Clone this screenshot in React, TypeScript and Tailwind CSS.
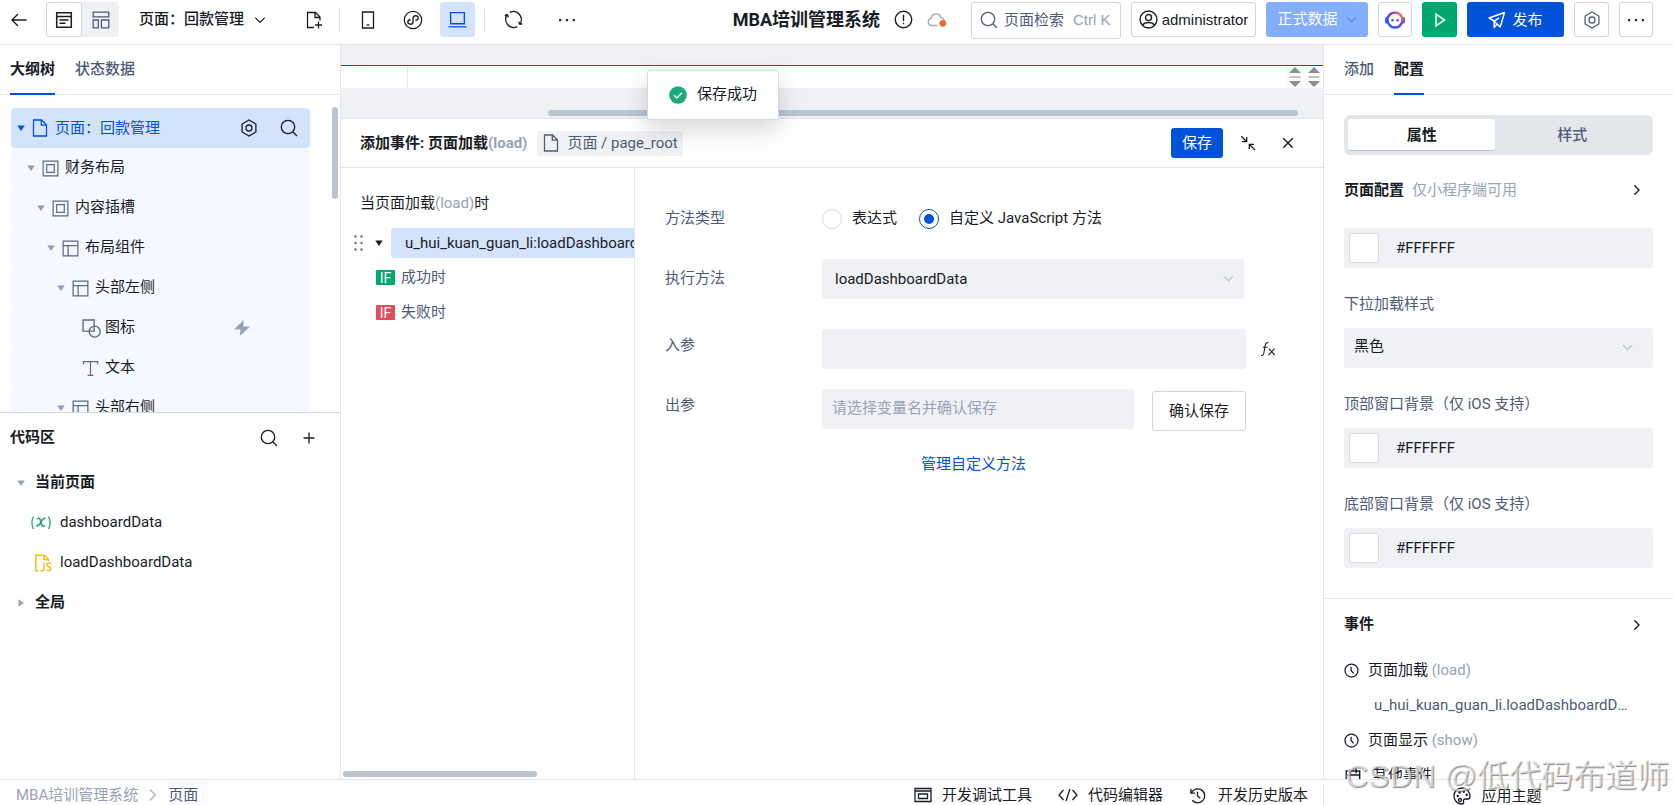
import { useState, type ReactNode } from "react";

type IconProps = { size?: number; className?: string; children?: ReactNode };

function Svg({ size = 18, className = "", children }: IconProps) {
  return (
    <svg
      width={size}
      height={size}
      viewBox="0 0 18 18"
      fill="none"
      stroke="currentColor"
      strokeWidth="1.3"
      aria-hidden="true"
      className={`shrink-0 ${className}`}
    >
      {children}
    </svg>
  );
}

const BackIcon = () => (
  <Svg>
    <path d="M16.5 9H2M8 3 2 9l6 6" />
  </Svg>
);
const ListIcon = () => (
  <Svg>
    <path d="M1.7 1.7h14.6v14.6H1.7zM1.7 5.5h14.6M4.5 9h9M4.5 12.3h6" strokeWidth="1.5" />
  </Svg>
);
const BlocksIcon = () => (
  <Svg>
    <path d="M1.2 1.2h15.6v4.6H1.2zM1.2 9h5.1v7.8H1.2zM9.4 9h7.4v7.8H9.4z" />
  </Svg>
);
const ChevronDown = ({ size = 12, className = "" }: IconProps) => (
  <Svg size={size} className={className}>
    <path d="m2 5.5 7 7 7-7" strokeWidth="1.8" />
  </Svg>
);
const ChevronRight = ({ size = 12, className = "" }: IconProps) => (
  <Svg size={size} className={className}>
    <path d="m5 2 7 7-7 7" strokeWidth="2" />
  </Svg>
);
const FilePlusIcon = () => (
  <Svg>
    <path d="M9 16.5H2.5v-15h8l4.5 4.500v3.500M10 1.500v5h5M10 14h7M13.500 10.500v7" />
  </Svg>
);
const PhoneIcon = () => (
  <Svg>
    <path d="M3.500 1h11v16h-11z" />
    <path d="M7.500 14h3" />
  </Svg>
);
const MiniAppIcon = () => (
  <Svg size={20}>
    <circle cx="9" cy="9" r="7.800" strokeWidth="1.100" />
    <path d="M6.800 8.800c-3.400.2-3.200 4 0 4 1.300 0 2.200-.9 2.200-2V7.200c0-1.100.9-2 2.200-2 3.200 0 3.400 3.800 0 4" strokeWidth="1.200" />
  </Svg>
);
const LaptopIcon = () => (
  <Svg size={19}>
    <path d="M2.500 2.500h13v10.500h-13zM.5 16h17" strokeWidth="1.300" />
  </Svg>
);
const RefreshIcon = () => (
  <Svg size={19}>
    <path d="M5.500 2.200a7.600 7.600 0 0 1 9.300 11.500M12.500 15.800A7.600 7.600 0 0 1 3.200 4.300M3.200 4.300l-2.400.9M3.200 4.300l.9 2.700M14.800 13.700l-.8-2.700M14.800 13.700l2.500-.7" />
  </Svg>
);
const DotsIcon = () => (
  <Svg>
    <g fill="currentColor" stroke="none">
      <rect x="1" y="8" width="2.200" height="2.200" rx=".6" />
      <rect x="7.900" y="8" width="2.200" height="2.200" rx=".6" />
      <rect x="14.800" y="8" width="2.200" height="2.200" rx=".6" />
    </g>
  </Svg>
);
const AlertIcon = () => (
  <Svg size={19}>
    <circle cx="9" cy="9" r="7.800" />
    <path d="M9 4.500v6" />
    <path d="M9 12v1.500" />
  </Svg>
);
const CloudIcon = () => (
  <svg width="20" height="18" viewBox="0 0 20 18" fill="none" aria-hidden="true" className="shrink-0">
    <path d="M10.500 14.500H4.800a3.700 3.700 0 0 1-.6-7.300 5 5 0 0 1 9.800-.4c1.800.2 3 1.200 3.400 2.700" stroke="#a3aec2" strokeWidth="1.400" />
    <circle cx="15.800" cy="12.300" r="3.400" fill="#ed6c2d" />
  </svg>
);
const SearchIcon = ({ size = 18, className = "" }: IconProps) => (
  <Svg size={size} className={className}>
    <circle cx="8" cy="8" r="6.700" />
    <path d="m13 13 4 4" />
  </Svg>
);
const UserIcon = () => (
  <Svg size={19}>
    <circle cx="9" cy="9" r="8" />
    <circle cx="9" cy="7.200" r="2.900" />
    <path d="M3.500 14.500c1-2.200 3-2.700 5.500-2.700s4.500.5 5.500 2.700" />
  </Svg>
);
const BotIcon = () => (
  <svg width="20" height="20" viewBox="0 0 20 20" fill="none" aria-hidden="true" className="shrink-0">
    <defs>
      <linearGradient id="bot" x1="3" y1="17" x2="16" y2="3" gradientUnits="userSpaceOnUse">
        <stop offset="0" stopColor="#2a5bff" />
        <stop offset=".6" stopColor="#6a35f5" />
        <stop offset="1" stopColor="#ff7a45" />
      </linearGradient>
    </defs>
    <rect x="0" y="7" width="3.500" height="6.500" rx="1.500" fill="#2a5bff" />
    <rect x="16.500" y="7" width="3.500" height="6.500" rx="1.500" fill="#8a4bf0" />
    <circle cx="10" cy="10" r="7.500" fill="#fff" stroke="url(#bot)" strokeWidth="2.400" />
    <circle cx="7.500" cy="10.200" r="1.200" fill="#5a3cf5" />
    <circle cx="12.500" cy="10.200" r="1.200" fill="#5a3cf5" />
  </svg>
);
const PlayIcon = () => (
  <Svg>
    <path d="M5 3.200v11.600L13.500 9z" strokeWidth="1.600" />
  </Svg>
);
const SendIcon = () => (
  <Svg>
    <path d="M16.500 1.500 1.200 7l5 3.200 6 5.800zM6.200 10.200v6.300l2.600-3M6.200 10.200 11 6.800" strokeWidth="1.500" strokeLinejoin="round" />
  </Svg>
);
const HexIcon = () => (
  <Svg>
    <path d="m9 1 6.900 4v8L9 17l-6.900-4V5z" />
    <circle cx="9" cy="9" r="3" />
  </Svg>
);
const FileIcon = () => (
  <Svg>
    <path d="M2.500 1h8L15.500 6v11h-13zM10.300 1v5.200h5.200" />
  </Svg>
);
const SlotIcon = () => (
  <Svg size={17}>
    <path d="M1.200 1.200h15.600v15.600H1.200zM5 5h8v8H5z" />
  </Svg>
);
const LayoutIcon = () => (
  <Svg size={17}>
    <path d="M1.200 1.200h15.600v15.600H1.200zM1.200 6h15.600M6.500 6v10.800" />
  </Svg>
);
const ShapesIcon = () => (
  <Svg size={19}>
    <path d="M1 1h10.500v10.500H1z" />
    <circle cx="12" cy="12" r="5.200" />
  </Svg>
);
const TextIcon = () => (
  <Svg size={17}>
    <path d="M1.500 4.500V1.700h15v2.800M9 1.700v14.600M6 16.300h6" />
  </Svg>
);
const BoltIcon = () => (
  <Svg size={18}>
    <path d="M10.500 1 1 10.500h6.500L6.800 17 17 7.500h-6.500z" fill="currentColor" stroke="none" />
  </Svg>
);
const PlusIcon = () => (
  <Svg size={14}>
    <path d="M9 2v14M2 9h14" strokeWidth="1.700" />
  </Svg>
);
const VariableIcon = () => (
  <svg width="20" height="16" viewBox="0 0 20 16" fill="none" stroke="currentColor" strokeWidth="1.300" aria-hidden="true" className="shrink-0">
    <path d="M2.500 1.500c-2 4-2 8.500 0 12.500M17.500 1.500c2 4 2 8.500 0 12.500" />
    <path d="M6 3.800c3-1.500 3.500 1 4 3.200.5 2.800 1.200 5.300 3.800 3.800M14.500 3.300c-2.800-.5-3.800 2.300-4.500 3.700-.9 2-2 4.300-4.800 3.800" strokeWidth="1.700" />
  </svg>
);
const JsFileIcon = () => (
  <Svg size={18}>
    <path d="M4.500 16.800H1.800V1.200h8.700l3.700 3.800v2.300M9.800 1.200v4.300h4.400" strokeWidth="1.500" />
    <path d="M9.800 8.800v6.200c0 1.200-.6 1.800-1.600 1.800H6.500M16.800 9.800c-.6-.5-1.300-.7-2-.7-1.200 0-1.900.7-1.900 1.600 0 2.300 3.900 1.700 3.900 4.100 0 1-.8 1.800-2 1.800-.9 0-1.700-.3-2.200-.9" strokeWidth="1.500" />
  </Svg>
);
const ShrinkIcon = () => (
  <Svg size={16}>
    <path d="m1.500 1.500 6 6M7.500 2.200v5.300H2.200M17 17l-6.500-6.500M10.500 15.800v-5.300h5.300" strokeWidth="1.500" />
  </Svg>
);
const CloseIcon = () => (
  <Svg size={14}>
    <path d="m3 3 12 12M15 3 3 15" strokeWidth="1.800" />
  </Svg>
);
const ClockIcon = () => (
  <Svg size={15}>
    <circle cx="9" cy="9" r="7.800" strokeWidth="1.500" />
    <path d="M8.500 4.500V9l3 3.500" strokeWidth="1.500" />
  </Svg>
);
const CalendarIcon = () => (
  <Svg size={16}>
    <path d="M1.500 3.500h15v13h-15zM1.500 8h15M5.500 1v5M12.500 1v5" strokeWidth="1.700" />
  </Svg>
);
const FxIcon = () => (
  <Svg size={16}>
    <path d="M9.500 2.200c-2-1-3.200 0-3.600 2.300l-1.600 9.300c-.3 2-1.300 2.800-3 2.200M3 7h5.500M10 8.500l6.500 7.500M16.500 8.500 9.500 16" strokeWidth="1.200" />
  </Svg>
);
const DebugIcon = () => (
  <Svg size={18}>
    <path d="M1 2.500h16v13H1zM1 5h16" />
    <path d="M4.500 8h9v4.500h-9z" />
  </Svg>
);
const CodeIcon = () => (
  <svg width="20" height="16" viewBox="0 0 20 16" fill="none" stroke="currentColor" strokeWidth="1.300" aria-hidden="true" className="shrink-0">
    <path d="M5.500 3 1 8l4.500 5M14.500 3 19 8l-4.500 5M12 2 8 14" />
  </svg>
);
const HistoryIcon = () => (
  <Svg size={17}>
    <path d="M2 2v4.500h4.500M2.400 6.500A7.400 7.400 0 1 1 3.500 14M9 5v4.500l3 2.500" strokeWidth="1.400" />
  </Svg>
);
const PaletteIcon = () => (
  <Svg size={18}>
    <path d="M9 17c1.500 0 2-1 1.500-2.300-.5-1.500.3-2.700 2-2.700h2.300c1.400 0 2.200-1 2.200-2.800C17 4.700 13.500 1 9 1S1 4.500 1 9s3.500 8 8 8z" />
    <g fill="currentColor" stroke="none">
      <circle cx="4.800" cy="9" r="1.200" />
      <circle cx="6.500" cy="5.500" r="1.200" />
      <circle cx="10.800" cy="4.800" r="1.200" />
      <circle cx="13.700" cy="7.700" r="1.200" />
    </g>
    <circle cx="7" cy="13" r="1.500" />
  </Svg>
);
const Caret = ({ right = false, className = "" }: { right?: boolean; className?: string }) => (
  <svg width="8" height="8" viewBox="0 0 8 8" fill="currentColor" aria-hidden="true" className={`shrink-0 ${className}`}>
    <path d={right ? "M1.500 0.300 7 4 1.500 7.700z" : "M0.300 1.500h7.400L4 7z"} />
  </svg>
);
const SpinnerIcon = () => (
  <svg width="12" height="20" viewBox="0 0 12 20" fill="#8c8c8c" aria-hidden="true" className="shrink-0">
    <path d="M6 0 12 6H0zM6 20 12 14H0zM.5 9.400h11v1H.5z" />
  </svg>
);

const TREE: { label: string; pad: string; icon: ReactNode; leaf?: boolean; bolt?: boolean }[] = [
  { label: "财务布局", pad: "pl-4", icon: <SlotIcon /> },
  { label: "内容插槽", pad: "pl-[26px]", icon: <SlotIcon /> },
  { label: "布局组件", pad: "pl-9", icon: <LayoutIcon /> },
  { label: "头部左侧", pad: "pl-[46px]", icon: <LayoutIcon /> },
  { label: "图标", pad: "pl-[71px]", icon: <ShapesIcon />, leaf: true, bolt: true },
  { label: "文本", pad: "pl-[71px]", icon: <TextIcon />, leaf: true },
  { label: "头部右侧", pad: "pl-[46px]", icon: <LayoutIcon /> },
];

function Header() {
  const boxed = "flex h-[35px] items-center justify-center rounded-[3px] border border-[#cfd5e0]";
  return (
    <header className="flex h-[45px] shrink-0 items-start border-b border-[#e3e6eb] bg-white pt-0.5 pr-5 pl-2.5">
      <button aria-label="返回" className="flex h-[35px] items-center">
        <BackIcon />
      </button>
      <div className="ml-[18px] flex rounded-[3px] bg-[#f0f1f5]">
        <button aria-label="大纲" className="flex h-[35px] w-9 items-center justify-center rounded-[3px] border border-[#cfd5e0] bg-white">
          <ListIcon />
        </button>
        <button aria-label="组件" className="flex h-[35px] w-[37px] items-center justify-center text-[#4e5b78]">
          <BlocksIcon />
        </button>
      </div>
      <button className="ml-5 flex h-[35px] items-center gap-2.5 font-medium">
        <span className="pb-0.5">页面：回款管理</span>
        <ChevronDown />
      </button>
      <button aria-label="新建页面" className="ml-[35px] flex h-[35px] w-[26px] items-center justify-center">
        <FilePlusIcon />
      </button>
      <span className="mt-1.5 ml-3 h-6 w-px bg-[#dcdfe6]" />
      <button aria-label="手机" className="ml-[10px] flex h-[35px] w-9 items-center justify-center">
        <PhoneIcon />
      </button>
      <button aria-label="小程序" className="ml-[9px] flex h-[35px] w-9 items-center justify-center">
        <MiniAppIcon />
      </button>
      <button aria-label="电脑" className="ml-[9px] flex h-[35px] w-[35px] items-center justify-center rounded-[3px] bg-[#d4e3fc] text-[#0052d9]">
        <LaptopIcon />
      </button>
      <span className="mt-1.5 ml-[9px] h-6 w-px bg-[#dcdfe6]" />
      <button aria-label="刷新" className="ml-[10px] flex h-[35px] w-9 items-center justify-center">
        <RefreshIcon />
      </button>
      <button aria-label="更多" className="ml-[18px] flex h-[35px] w-9 items-center justify-center">
        <DotsIcon />
      </button>

      <div className="ml-auto flex items-start gap-2.5 whitespace-nowrap">
        <div className="mr-3.5 flex h-[35px] items-center">
          <h1 className="text-lg font-bold">MBA培训管理系统</h1>
          <span className="ml-3.5 flex items-center gap-3.5">
            <AlertIcon />
            <CloudIcon />
          </span>
        </div>
        <button className="flex h-[37px] w-[150px] items-center gap-1.5 rounded-[3px] border border-[#cfd5e0] pb-0.5 pl-2 font-['Liberation_Sans','Noto_Sans_CJK_SC',sans-serif] text-[#4e5b78]">
          <SearchIcon />
          <span>页面检索</span>
          <span className="ml-[3px] text-[#98a2b8]">Ctrl K</span>
        </button>
        <button className={`${boxed} w-[125px] gap-1 font-['Liberation_Sans',sans-serif]`}>
          <UserIcon />
          administrator
        </button>
        <button className="flex h-[35px] w-[102px] items-center justify-center gap-2 rounded-[3px] bg-[#82aefb] text-white">
          <span className="pb-0.5">正式数据</span>
          <ChevronDown size={11} className="text-[#6b86b8]" />
        </button>
        <button aria-label="助手" className={`${boxed} w-[34px]`}>
          <BotIcon />
        </button>
        <button aria-label="运行" className="flex h-[35px] w-[35px] items-center justify-center rounded-[3px] bg-[#00a870] text-white">
          <PlayIcon />
        </button>
        <button className="flex h-[35px] w-[97px] items-center justify-center gap-1.5 rounded-[3px] bg-[#0052d9] text-white">
          <SendIcon />
          发布
        </button>
        <button aria-label="设置" className={`${boxed} w-[35px] text-[#4e5b78]`}>
          <HexIcon />
        </button>
        <button aria-label="更多操作" className={`${boxed} w-[34px]`}>
          <DotsIcon />
        </button>
      </div>
    </header>
  );
}

function Tabs({ items, active, className }: { items: string[]; active: number; className: string }) {
  return (
    <div className={`flex h-[50px] shrink-0 gap-5 border-b border-[#e3e6eb] ${className}`}>
      {items.map((t, i) => (
        <button
          key={t}
          className={
            i === active
              ? "-mb-px border-b-2 border-[#0052d9] pb-px font-bold"
              : "-mb-px border-b-2 border-transparent pb-px font-medium text-[#4e5b78]"
          }
        >
          {t}
        </button>
      ))}
    </div>
  );
}

function LeftPanel() {
  return (
    <aside className="flex w-[341px] shrink-0 flex-col border-r border-[#e3e6eb]">
      <Tabs items={["大纲树", "状态数据"]} active={0} className="px-2.5" />
      <div className="flex h-[318px] shrink-0 overflow-hidden border-b border-[#d5d9e2] pt-[13px] pr-0.5 pl-[11px]">
        <ul className="min-w-0 flex-1">
          <li className="flex h-10 items-center rounded bg-[#d4e3fc] pr-3 pl-1.5 text-[#0052d9]">
            <Caret />
            <span className="ml-1.5 flex items-center gap-1.5">
              <FileIcon />
              <span className="pb-px">页面：回款管理</span>
            </span>
            <span className="ml-auto flex gap-[22px] text-[#181c25]">
              <button aria-label="页面设置">
                <HexIcon />
              </button>
              <button aria-label="搜索组件">
                <SearchIcon />
              </button>
            </span>
          </li>
          {TREE.map((n) => (
            <li key={n.label} className={`flex h-10 items-center rounded bg-[#f5f8ff] ${n.pad}`}>
              {!n.leaf && <Caret className="mr-[7px] text-[#8f9bb3]" />}
              <span className="flex w-[23px] text-[#5c6a86]">{n.icon}</span>
              <span className="pb-0.5">{n.label}</span>
              {n.bolt && (
                <button aria-label="事件" className="mr-[59px] ml-auto text-[#98a2b8]">
                  <BoltIcon />
                </button>
              )}
            </li>
          ))}
        </ul>
        <div className="-mt-px ml-[22px] h-[92px] w-1.5 rounded-full bg-[#bcc4d0]" />
      </div>

      <div className="flex h-[50px] items-center pr-6 pl-2.5">
        <h2 className="pb-0.5 font-bold">代码区</h2>
        <button aria-label="搜索代码" className="mr-6 ml-auto">
          <SearchIcon />
        </button>
        <button aria-label="新增">
          <PlusIcon />
        </button>
      </div>
      <ul>
        <li className="flex h-10 items-center gap-2.5 pl-[17px] font-bold">
          <Caret className="text-[#98a2b8]" />
          <span className="pb-0.5">当前页面</span>
        </li>
        <li className="flex h-10 items-center pl-[31px]">
          <span className="flex w-[29px] text-[#2ba471]">
            <VariableIcon />
          </span>
          <span className="pb-0.5">dashboardData</span>
        </li>
        <li className="flex h-10 items-center pl-[34px]">
          <span className="flex w-[26px] text-[#fbb914]">
            <JsFileIcon />
          </span>
          <span className="pb-0.5">loadDashboardData</span>
        </li>
        <li className="flex h-10 items-center gap-2.5 pl-[17px] font-bold">
          <Caret right className="text-[#98a2b8]" />
          <span className="pb-0.5">全局</span>
        </li>
      </ul>
    </aside>
  );
}

function Canvas() {
  return (
    <div className="shrink-0 bg-[#f0f1f5] pt-5">
      <div className="flex h-[23px] border-t border-[#0052d9] bg-white">
        <div className="w-[67px] border-r border-[#e3e6eb]" />
        <div className="ml-auto flex items-center gap-[7px] bg-[#fafafa] px-[3px]">
          <SpinnerIcon />
          <SpinnerIcon />
        </div>
      </div>
      <div className="flex h-[31px] items-end border-b border-[#e3e6eb] pr-[25px] pb-0.5 pl-[207px]">
        <div className="h-1.5 flex-1 rounded-full bg-[#bcc4d0]" />
      </div>
    </div>
  );
}

function EventSteps() {
  return (
    <section className="flex w-[294px] shrink-0 flex-col border-r border-[#e3e6eb] pt-[19px]">
      <p className="pl-[19px] leading-8">
        当页面加载<span className="text-[#98a2b8]">(load)</span>时
      </p>
      <div className="mt-[9px] flex h-[30px] items-center overflow-hidden pl-[13px]">
        <svg width="10" height="16" viewBox="0 0 10 16" fill="#6b7280" aria-hidden="true" className="shrink-0">
          {[1.5, 8, 14.5].map((y) => (
            <g key={y}>
              <circle cx="1.500" cy={y} r="1.200" />
              <circle cx="7.500" cy={y} r="1.200" />
            </g>
          ))}
        </svg>
        <Caret className="mr-2 ml-[11px]" />
        <button className="h-[30px] min-w-0 flex-1 overflow-hidden rounded-l bg-[#d4e3fc] pl-3.5 text-left whitespace-nowrap">
          u_hui_kuan_guan_li:loadDashboardData
        </button>
      </div>
      <ul className="mt-0.5 text-[#4e5b78]">
        <li className="flex h-[35px] items-center gap-1.5 pl-[35px]">
          <span className="flex h-[15px] w-[19px] items-center justify-center rounded-[1px] bg-[#00a870] text-sm leading-none text-white">IF</span>
          <span className="pb-px">成功时</span>
        </li>
        <li className="flex h-[35px] items-center gap-1.5 pl-[35px]">
          <span className="flex h-[15px] w-[19px] items-center justify-center rounded-[1px] bg-[#e34d59] text-sm leading-none text-white">IF</span>
          <span className="pb-px">失败时</span>
        </li>
      </ul>
      <div className="mt-auto mb-0.5 ml-0.5 h-1.5 w-[194px] rounded-full bg-[#bcc4d0]" />
    </section>
  );
}

function Radio({ label, checked, onChange }: { label: string; checked: boolean; onChange: () => void }) {
  return (
    <label className="flex items-center gap-2.5">
      <input
        type="radio"
        name="method-type"
        checked={checked}
        onChange={onChange}
        className="size-5 appearance-none rounded-full border border-[#d5d9e2] bg-white bg-clip-content p-1 checked:border-[#0052d9] checked:bg-[#0052d9]"
      />
      <span className="pb-0.5">{label}</span>
    </label>
  );
}

function MethodForm() {
  const [type, setType] = useState("js");
  const label = "w-[157px] shrink-0 text-[#4e5b78]";
  return (
    <form className="min-w-0 flex-1 pt-[31px] pr-[77px] pl-[30px]" onSubmit={(e) => e.preventDefault()}>
      <div className="flex h-10 items-center" role="radiogroup" aria-label="方法类型">
        <span className={`${label} pb-0.5`}>方法类型</span>
        <div className="flex gap-[22px]">
          <Radio label="表达式" checked={type === "exp"} onChange={() => setType("exp")} />
          <Radio label="自定义 JavaScript 方法" checked={type === "js"} onChange={() => setType("js")} />
        </div>
      </div>
      <div className="mt-5 flex h-10 items-center">
        <label htmlFor="method" className={`${label} pb-0.5`}>
          执行方法
        </label>
        <div className="relative mr-0.5 flex-1">
          <select id="method" className="block h-10 w-full appearance-none rounded-[3px] bg-[#f0f1f5] pr-9 pl-[13px]">
            <option>loadDashboardData</option>
          </select>
          <ChevronDown size={11} className="pointer-events-none absolute top-3.5 right-2.5 text-[#b4bac6]" />
        </div>
      </div>
      <div className="mt-[30px] flex h-10 items-center">
        <label htmlFor="input-param" className={`${label} pb-2`}>
          入参
        </label>
        <input id="input-param" className="h-10 min-w-0 flex-1 rounded-[3px] bg-[#f0f1f5] px-[11px]" />
        <button type="button" aria-label="表达式编辑" className="-mr-[30px] ml-3.5 text-[#181c25]">
          <FxIcon />
        </button>
      </div>
      <div className="mt-5 flex h-10 items-center">
        <label htmlFor="output-param" className={`${label} pb-2`}>
          出参
        </label>
        <input
          id="output-param"
          placeholder="请选择变量名并确认保存"
          className="h-10 min-w-0 flex-1 rounded-[3px] bg-[#f0f1f5] px-[10px] pb-0.5 placeholder:text-[#98a2b8]"
        />
        <button type="button" className="mt-1 ml-[18px] h-10 w-[94px] rounded-[3px] border border-[#cfd5e0]">
          确认保存
        </button>
      </div>
      <p className="mt-[25px] pl-64">
        <a href="#methods" className="text-[#0052d9]">
          管理自定义方法
        </a>
      </p>
    </form>
  );
}

function EventEditor() {
  return (
    <div className="flex min-h-0 flex-1 flex-col bg-white">
      <div className="flex h-[49px] shrink-0 items-center border-b border-[#e3e6eb] pr-7 pl-[19px]">
        <h2 className="font-bold">
          添加事件: 页面加载<span className="text-[#98a2b8]">(load)</span>
        </h2>
        <span className="ml-2.5 flex h-[25px] items-center gap-[7px] rounded-[3px] bg-[#f0f1f5] px-[5px] text-[#4e5b78]">
          <FileIcon />
          页面 / page_root
        </span>
        <button className="ml-auto h-[30px] w-[52px] rounded-[3px] bg-[#0052d9] text-white">保存</button>
        <button aria-label="收起" className="ml-[17px]">
          <ShrinkIcon />
        </button>
        <button aria-label="关闭" className="ml-[25px]">
          <CloseIcon />
        </button>
      </div>
      <div className="flex min-h-0 flex-1">
        <EventSteps />
        <MethodForm />
      </div>
    </div>
  );
}

function ColorField({ id }: { id: string }) {
  return (
    <div className="flex h-10 items-center rounded-[3px] bg-[#f0f1f5] pl-[5px]">
      <span className="size-[30px] shrink-0 rounded-[3px] border border-[#d5d9e2] bg-white" />
      <input id={id} aria-label="颜色值" defaultValue="#FFFFFF" className="h-10 min-w-0 flex-1 bg-transparent pb-px pl-[17px]" />
    </div>
  );
}

function RightPanel() {
  const label = "mt-[26px] mb-3.5 block leading-5 text-[#4e5b78]";
  return (
    <aside className="flex w-[350px] shrink-0 flex-col overflow-hidden border-l border-[#e3e6eb]">
      <Tabs items={["添加", "配置"]} active={1} className="px-5" />
      <div className="mx-5 mt-5 flex h-10 shrink-0 rounded-md bg-[#e3e6eb] px-1 font-bold">
        <button className="my-1 w-[49%] rounded-[3px] border-b border-[#bcc4d0] bg-white">属性</button>
        <button className="my-1 flex-1 font-medium text-[#4e5b78]">样式</button>
      </div>
      <div className="mx-5 mt-[25px] flex shrink-0 items-center pr-2.5 leading-5">
        <h3 className="font-bold">页面配置</h3>
        <span className="ml-2 text-[#98a2b8]">仅小程序端可用</span>
        <button aria-label="展开页面配置" className="ml-auto">
          <ChevronRight />
        </button>
      </div>
      <div className="mx-5 mt-7 shrink-0">
        <ColorField id="bg" />
        <label htmlFor="pull" className={label}>
          下拉加载样式
        </label>
        <div className="relative">
          <select id="pull" className="block h-10 w-full appearance-none rounded-[3px] bg-[#f0f1f5] pr-9 pb-1 pl-[10px]">
            <option>黑色</option>
          </select>
          <ChevronDown size={11} className="pointer-events-none absolute top-3.5 right-5 text-[#b4bac6]" />
        </div>
        <label htmlFor="top-bg" className={label}>
          顶部窗口背景（仅 iOS 支持）
        </label>
        <ColorField id="top-bg" />
        <label htmlFor="bottom-bg" className={label}>
          底部窗口背景（仅 iOS 支持）
        </label>
        <ColorField id="bottom-bg" />
      </div>
      <section className="mt-[30px] shrink-0 border-t border-[#e3e6eb] px-5 pt-2">
        <div className="flex h-[35px] items-center pr-2.5">
          <h3 className="pb-0.5 font-bold">事件</h3>
          <button aria-label="展开事件" className="ml-auto">
            <ChevronRight />
          </button>
        </div>
        <ul className="mt-[11px]">
          <li className="flex h-[35px] items-center">
            <ClockIcon />
            <span className="ml-[9px] pb-0.5">
              页面加载 <span className="text-[#98a2b8]">(load)</span>
            </span>
          </li>
          <li className="h-[35px] truncate pr-[25px] pl-[30px] leading-[35px] text-[#4e5b78]">
            u_hui_kuan_guan_li.loadDashboardData
          </li>
          <li className="flex h-[35px] items-center">
            <ClockIcon />
            <span className="ml-[9px] pb-0.5">
              页面显示 <span className="text-[#98a2b8]">(show)</span>
            </span>
          </li>
          <li className="flex h-[35px] items-center pl-px">
            <CalendarIcon />
            <span className="ml-3 pb-0.5">其他事件</span>
          </li>
        </ul>
      </section>
    </aside>
  );
}

function Footer() {
  return (
    <footer className="h-[26px] shrink-0 overflow-hidden border-t border-[#e3e6eb]">
      <div className="flex h-[30px] items-center">
        <nav className="flex h-full items-center pl-4 text-[#98a2b8]">
          <a href="#app">MBA培训管理系统</a>
          <ChevronRight size={14} className="mx-2 text-[#b4bac6]" />
          <a href="#page" className="flex h-full items-center bg-[#fafbfc] pr-2.5 text-[#4e5b78]">
            页面
          </a>
        </nav>
        <div className="ml-auto flex items-center gap-[26px] pr-[15px]">
          <button className="flex items-center gap-2.5">
            <DebugIcon />
            开发调试工具
          </button>
          <button className="flex items-center gap-2.5">
            <CodeIcon />
            代码编辑器
          </button>
          <button className="flex items-center gap-3">
            <HistoryIcon />
            开发历史版本
          </button>
        </div>
        <div className="mt-1 flex h-[26px] w-[350px] items-center justify-center border-l border-[#e3e6eb] pr-0.5 pb-0.5">
          <button className="flex items-center gap-2.5">
            <PaletteIcon />
            应用主题
          </button>
        </div>
      </div>
    </footer>
  );
}

export default function App() {
  return (
    <div className="relative flex h-screen flex-col overflow-hidden bg-white font-['Roboto','Noto_Sans_CJK_SC',sans-serif] text-[15px] leading-5 text-[#181c25]">
      <Header />
      <div className="flex min-h-0 flex-1">
        <LeftPanel />
        <main className="relative flex min-w-0 flex-1 flex-col">
          <Canvas />
          <EventEditor />
          <div
            role="status"
            className="absolute top-[25px] left-[306px] flex h-[50px] w-[132px] items-center gap-2.5 rounded-[3px] border border-[#d5d9e2] bg-white pl-[21px] shadow-[0_10px_25px_rgba(0,0,0,0.16)]"
          >
            <svg width="18" height="18" viewBox="0 0 18 18" aria-hidden="true">
              <circle cx="9" cy="9" r="8.800" fill="#1bab79" />
              <path d="m5 9.300 2.800 2.700L13 6.700" fill="none" stroke="#fff" strokeWidth="1.400" />
            </svg>
            <span className="pb-0.5">保存成功</span>
          </div>
        </main>
        <RightPanel />
      </div>
      <Footer />
      <div className="pointer-events-none absolute right-1 bottom-[9px] font-['Liberation_Sans','Noto_Sans_CJK_SC',sans-serif] text-[32px] leading-10 whitespace-nowrap text-white/60 [text-shadow:1px_1px_1px_rgba(90,90,90,0.7)]">
        CSDN @低代码布道师
      </div>
    </div>
  );
}
